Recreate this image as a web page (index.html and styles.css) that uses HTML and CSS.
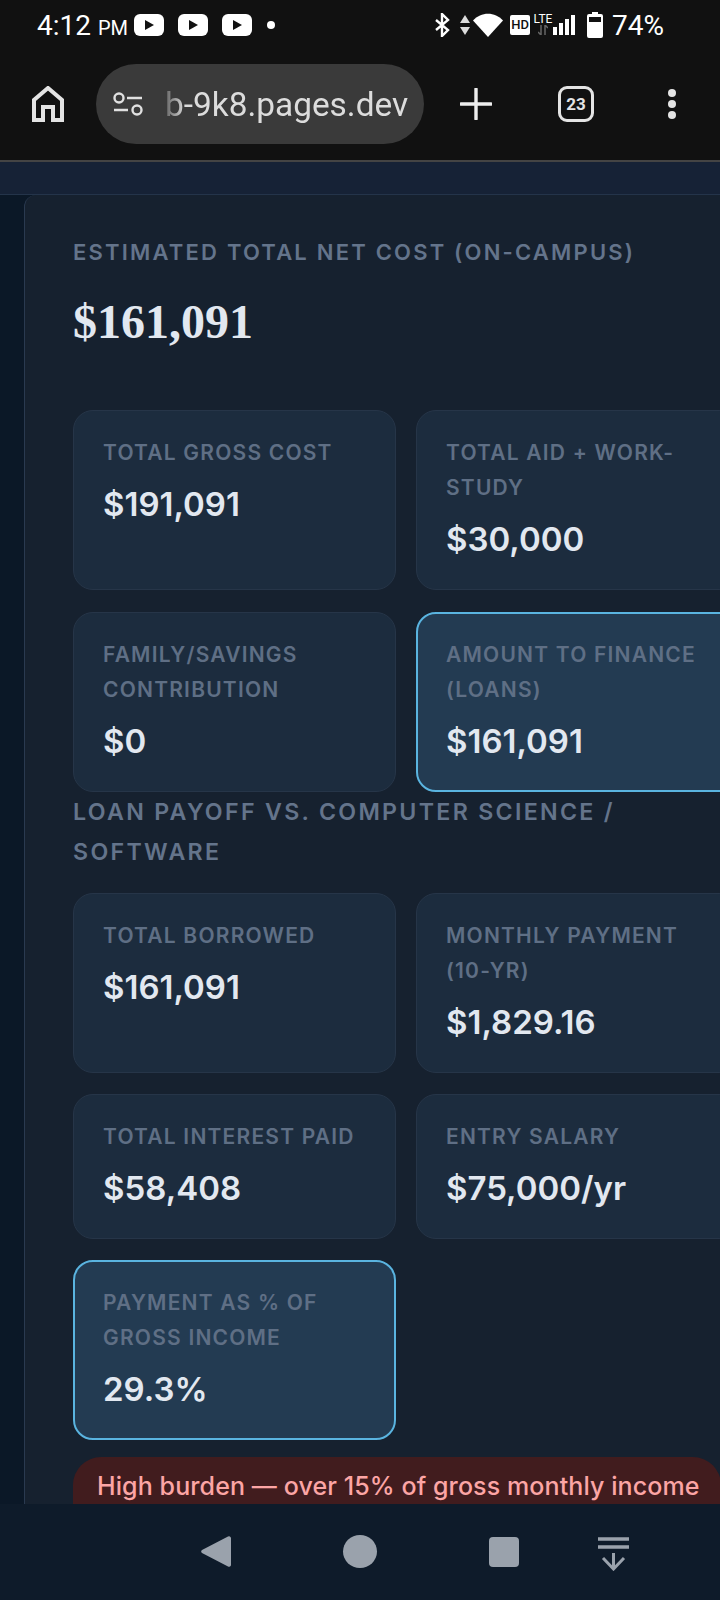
FILE: index.html
```html
<!DOCTYPE html>
<html>
<head>
  <meta charset="UTF-8">
  <title>Net cost</title>
  <link rel="stylesheet" href="styles.css">
</head>
<body>
  <div class="statusbar">
    <div class="status-left">
      <span class="clock">4:12 <small>PM</small></span>
      <svg class="yt" viewBox="0 0 30 22"><rect width="30" height="22" rx="6" fill="#fff"/><path d="M11 6l9 5-9 5z" fill="#111"/></svg>
      <svg class="yt" viewBox="0 0 30 22"><rect width="30" height="22" rx="6" fill="#fff"/><path d="M11 6l9 5-9 5z" fill="#111"/></svg>
      <svg class="yt" viewBox="0 0 30 22"><rect width="30" height="22" rx="6" fill="#fff"/><path d="M11 6l9 5-9 5z" fill="#111"/></svg>
      <span class="notif-dot"></span>
    </div>
    <div class="status-right">
      <svg class="ic-bt" viewBox="0 0 16 24"><path d="M2 7l12 10-6 6V1l6 6L2 17" fill="none" stroke="#fff" stroke-width="2.400"/></svg>
      <svg class="ic-updown" viewBox="0 0 10 20"><path d="M5 0l5 8H0zM5 20L0 12h10z" fill="#ddd"/></svg>
      <svg class="ic-wifi" viewBox="0 0 30 24"><path d="M0 7.500C8-1.500 22-1.500 30 7.500L15 24z" fill="#fff"/></svg>
      <span class="hd">HD</span>
      <span class="lte">LTE
        <svg class="ic-lte-arrows" viewBox="0 0 10 10"><path d="M3 0v10M0 7l3 3M7 10V0M7 0l3 3" fill="none" stroke="#666" stroke-width="1.500"/></svg>
      </span>
      <svg class="ic-signal" viewBox="0 0 22 20"><path d="M0 12h4v8H0zM6 8h4v12H6zM12 4h4v16h-4zM18 0h4v20h-4z" fill="#fff"/></svg>
      <svg class="ic-batt" viewBox="0 0 16 26"><path d="M5 0h6v2h3a2 2 0 0 1 2 2v20a2 2 0 0 1-2 2H2a2 2 0 0 1-2-2V4a2 2 0 0 1 2-2h3z" fill="#fff"/><rect x="2" y="5" width="12" height="5" fill="#111"/></svg>
      <span class="batt-text">74%</span>
    </div>
  </div>

  <div class="toolbar">
    <svg class="ic-home" viewBox="0 0 32 36"><path d="M2 34V14L16 2l14 12v20h-9V21H11v13z" fill="none" stroke="#e4e4e4" stroke-width="4"/></svg>
    <div class="urlbar">
      <svg class="ic-tune" viewBox="0 0 30 24"><circle cx="6" cy="6" r="4.500" fill="none" stroke="#e0e0e0" stroke-width="2.400"/><circle cx="24" cy="18" r="4.500" fill="none" stroke="#e0e0e0" stroke-width="2.400"/><path d="M14 6h15M1 18h14" stroke="#e0e0e0" stroke-width="2.600"/></svg>
      <span class="url">b-9k8.pages.dev</span>
    </div>
    <svg class="ic-plus" viewBox="0 0 32 32"><path d="M16 1v30M1 16h30" stroke="#eee" stroke-width="3.400" stroke-linecap="round"/></svg>
    <span class="tabs">23</span>
    <svg class="ic-more" viewBox="0 0 10 32"><circle cx="5" cy="5" r="4" fill="#e4e4e4"/><circle cx="5" cy="16" r="4" fill="#e4e4e4"/><circle cx="5" cy="27" r="4" fill="#e4e4e4"/></svg>
  </div>

  <div class="page">
    <div class="top-strip"></div>
    <div class="panel">
      <div class="section-title">Estimated Total Net Cost (On-Campus)</div>
      <div class="big-number">$161,091</div>

      <div class="stats">
        <div class="stat">
          <div class="stat-label">Total Gross Cost</div>
          <div class="stat-value">$191,091</div>
        </div>
        <div class="stat">
          <div class="stat-label">Total Aid + Work-Study</div>
          <div class="stat-value">$30,000</div>
        </div>
        <div class="stat">
          <div class="stat-label">Family/Savings Contribution</div>
          <div class="stat-value">$0</div>
        </div>
        <div class="stat hot">
          <div class="stat-label">Amount to Finance (Loans)</div>
          <div class="stat-value">$161,091</div>
        </div>
      </div>

      <div class="section-title loan-title">Loan Payoff vs. Computer Science / Software</div>

      <div class="stats loan-stats">
        <div class="stat">
          <div class="stat-label">Total Borrowed</div>
          <div class="stat-value">$161,091</div>
        </div>
        <div class="stat">
          <div class="stat-label">Monthly Payment (10-yr)</div>
          <div class="stat-value">$1,829.16</div>
        </div>
        <div class="stat">
          <div class="stat-label">Total Interest Paid</div>
          <div class="stat-value">$58,408</div>
        </div>
        <div class="stat">
          <div class="stat-label">Entry Salary</div>
          <div class="stat-value">$75,000/yr</div>
        </div>
        <div class="stat hot">
          <div class="stat-label">Payment as % of Gross Income</div>
          <div class="stat-value">29.3%</div>
        </div>
      </div>

      <div class="burden">High burden — over 15% of gross monthly income</div>
    </div>
  </div>

  <div class="navbar">
    <svg class="ic-back" viewBox="0 0 30 33"><path d="M27 1.500a2 2 0 0 1 3 1.500v27a2 2 0 0 1-3 1.500L1 18a2 2 0 0 1 0-3z" fill="#9aa2ac"/></svg>
    <span class="nav-circle"></span>
    <span class="nav-square"></span>
    <svg class="ic-down" viewBox="0 0 31 34"><path d="M0 2h31M0 10h31" stroke="#9aa2ac" stroke-width="3.600"/><path d="M15.500 16v16M5 21l10.500 11L26 21" fill="none" stroke="#9aa2ac" stroke-width="3"/></svg>
  </div>
</body>
</html>
```

FILE: styles.css
```css
* {
  box-sizing: border-box;
}
html, body {
  margin: 0;
  height: 1600px;
  overflow: hidden;
}
body {
  display: flex;
  flex-direction: column;
  background-color: #111;
  font-family: Inter, sans-serif;
}

/* status bar */
.statusbar {
  height: 50px;
  display: flex;
  justify-content: space-between;
  align-items: center;
  padding: 0 56px 0 37px;
  color: #fff;
  font-family: Roboto, sans-serif;
}
.status-left, .status-right {
  display: flex;
  align-items: center;
}
.clock {
  font-size: 28px;
  width: 97px;
  white-space: nowrap;
}
.clock small {
  font-size: 20px;
}
.yt {
  width: 30px;
  height: 22px;
  margin-right: 14px;
}
.notif-dot {
  width: 8px;
  height: 8px;
  margin-left: 1px;
  border-radius: 50%;
  background-color: #fff;
}
.ic-bt {
  width: 16px;
  height: 24px;
}
.ic-updown {
  width: 10px;
  height: 20px;
  margin-left: 10px;
}
.ic-wifi {
  width: 30px;
  height: 24px;
  margin-left: 3px;
}
.hd {
  width: 20px;
  height: 20px;
  margin-left: 7px;
  border-radius: 2px;
  background-color: #fff;
  color: #111;
  font-size: 13px;
  font-weight: 500;
  line-height: 20px;
  text-align: center;
}
.lte {
  width: 20px;
  height: 22px;
  margin-left: 3px;
  display: flex;
  flex-direction: column;
  align-items: center;
  font-size: 12px;
  line-height: 11px;
}
.ic-lte-arrows {
  width: 10px;
  height: 10px;
}
.ic-signal {
  width: 22px;
  height: 20px;
}
.ic-batt {
  width: 16px;
  height: 26px;
  margin-left: 12px;
}
.batt-text {
  margin-left: 9px;
  font-size: 28px;
}

/* browser toolbar */
.toolbar {
  height: 112px;
  display: flex;
  align-items: center;
  padding: 0 0 2px 32px;
  border-bottom: 2px solid #444;
}
.ic-home {
  width: 32px;
  height: 36px;
}
.urlbar {
  width: 328px;
  height: 80px;
  margin-left: 32px;
  display: flex;
  align-items: center;
  padding-left: 17px;
  border-radius: 40px;
  background-color: #3a3a3a;
}
.ic-tune {
  width: 30px;
  height: 24px;
}
.url {
  margin-left: 22px;
  color: #dcdcdc;
  font-family: Roboto, sans-serif;
  font-size: 33.400px;
  white-space: nowrap;
  -webkit-mask-image: linear-gradient(to right, rgba(0, 0, 0, 0.25), #000 20px);
  mask-image: linear-gradient(to right, rgba(0, 0, 0, 0.25), #000 20px);
}
.ic-plus {
  width: 32px;
  height: 32px;
  margin-left: 36px;
}
.tabs {
  width: 36px;
  height: 36px;
  margin-left: 66px;
  border: 3px solid #e4e4e4;
  border-radius: 9px;
  color: #e4e4e4;
  font-family: Roboto, sans-serif;
  font-size: 17px;
  font-weight: 700;
  line-height: 30px;
  text-align: center;
}
.ic-more {
  width: 10px;
  height: 32px;
  margin-left: 73px;
}

/* page */
.page {
  height: 1342px;
  overflow: hidden;
  padding-left: 24px;
  background-color: #0b1827;
}
.top-strip {
  height: 33px;
  margin-left: -24px;
  background-color: #162236;
  border-bottom: 1px solid #24344a;
}
.panel {
  width: 760px;
  padding: 37px 0 0 48px;
  border-left: 1px solid #2a3a50;
  border-top-left-radius: 12px;
  background-color: #16212f;
}
.section-title {
  color: #64748b;
  font-size: 22px;
  font-weight: 600;
  letter-spacing: 2.200px;
  line-height: 40px;
  text-transform: uppercase;
}
.big-number {
  margin: 15px 0 53px;
  color: #e2e8f0;
  font-family: "Liberation Serif", serif;
  font-size: 48px;
  font-weight: 700;
  line-height: 70px;
}
.loan-title {
  width: 600px;
  margin-bottom: 21px;
  font-size: 23.200px;
  letter-spacing: 2.300px;
}
.stats {
  display: grid;
  grid-template-columns: 323px 323px;
  gap: 22px 20px;
}
.loan-stats {
  row-gap: 21px;
}
.stat {
  padding: 24px 29px 28px;
  border: 1px solid #263548;
  border-radius: 20px;
  background-color: #1c2c3e;
}
.stat.hot {
  padding: 23px 28px 27px;
  border: 2px solid #5ab4e0;
  background-color: #233b52;
}
.stat-label {
  color: #5f6f85;
  font-size: 21px;
  font-weight: 600;
  letter-spacing: 1.200px;
  line-height: 35px;
  text-transform: uppercase;
}
.stat-value {
  margin-top: 12px;
  color: #e2e8f0;
  font-size: 33px;
  font-weight: 600;
  line-height: 44px;
}
.burden {
  width: 648px;
  height: 110px;
  margin-top: 17px;
  padding: 14px 24px;
  border-radius: 28px;
  background-color: #411c1e;
  color: #fca5a5;
  font-size: 25px;
  font-weight: 500;
  letter-spacing: 0.100px;
  white-space: nowrap;
}

/* android nav */
.navbar {
  flex: 1;
  display: flex;
  align-items: flex-start;
  padding: 31px 0 0 201px;
  background-color: #0e1b2a;
}
.ic-back {
  width: 30px;
  height: 33px;
}
.nav-circle {
  width: 34px;
  height: 33px;
  margin-left: 112px;
  border-radius: 50%;
  background-color: #9aa2ac;
}
.nav-square {
  width: 30px;
  height: 30px;
  margin: 2px 0 0 112px;
  border-radius: 4px;
  background-color: #9aa2ac;
}
.ic-down {
  width: 31px;
  height: 34px;
  margin: 2px 0 0 79px;
}
```
